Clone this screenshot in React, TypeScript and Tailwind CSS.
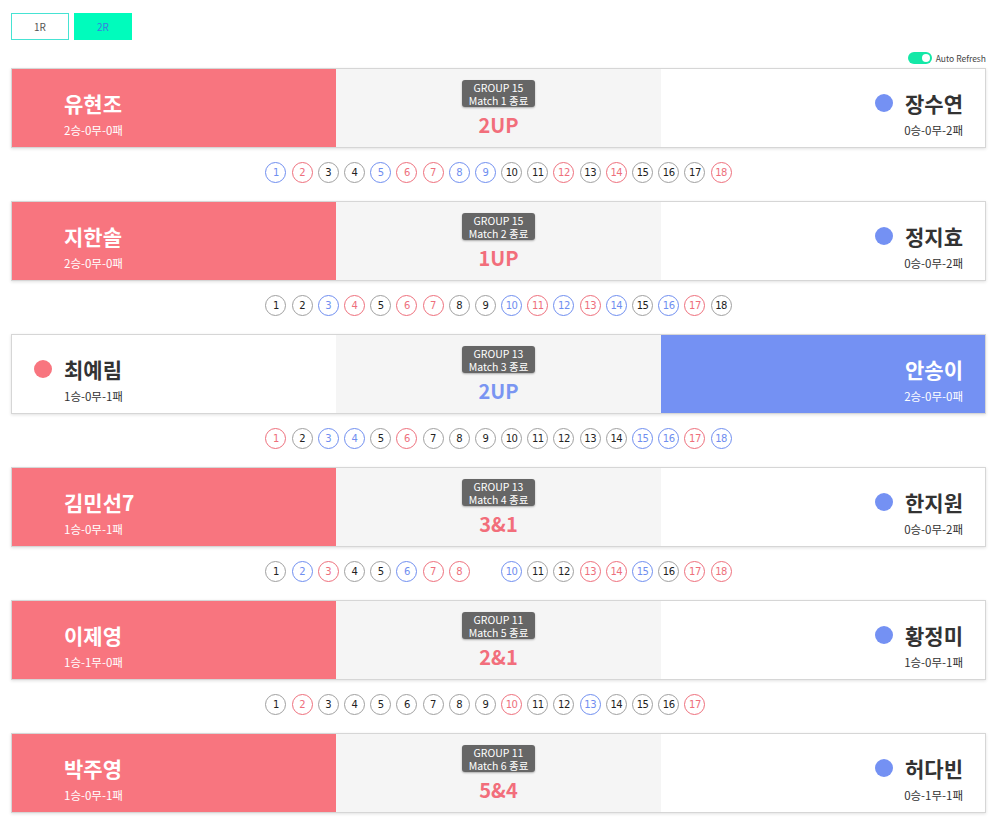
import React from "react";

type C = "b" | "r" | "g" | "x";
type Side = "red" | "blue";
interface Match {
  left: { name: string; rec: string };
  right: { name: string; rec: string };
  group: string;
  match: string;
  score: string;
  winner: Side;
  holes: C[];
}

const parse = (s: string): C[] => s.split("") as C[];

const matches: Match[] = [
  {
    left: { name: "유현조", rec: "2승-0무-0패" },
    right: { name: "장수연", rec: "0승-0무-2패" },
    group: "GROUP 15",
    match: "Match 1 종료",
    score: "2UP",
    winner: "red",
    holes: parse("brggbrrbbggrgrgggr"),
  },
  {
    left: { name: "지한솔", rec: "2승-0무-0패" },
    right: { name: "정지효", rec: "0승-0무-2패" },
    group: "GROUP 15",
    match: "Match 2 종료",
    score: "1UP",
    winner: "red",
    holes: parse("ggbrgrrggbrbrbgbrg"),
  },
  {
    left: { name: "최예림", rec: "1승-0무-1패" },
    right: { name: "안송이", rec: "2승-0무-0패" },
    group: "GROUP 13",
    match: "Match 3 종료",
    score: "2UP",
    winner: "blue",
    holes: parse("rgbbgrggggggggbbrb"),
  },
  {
    left: { name: "김민선7", rec: "1승-0무-1패" },
    right: { name: "한지원", rec: "0승-0무-2패" },
    group: "GROUP 13",
    match: "Match 4 종료",
    score: "3&1",
    winner: "red",
    holes: parse("gbrggbrrxbggrrbgrr"),
  },
  {
    left: { name: "이제영", rec: "1승-1무-0패" },
    right: { name: "황정미", rec: "1승-0무-1패" },
    group: "GROUP 11",
    match: "Match 5 종료",
    score: "2&1",
    winner: "red",
    holes: parse("grgggggggrggbgggrx"),
  },
  {
    left: { name: "박주영", rec: "1승-0무-1패" },
    right: { name: "허다빈", rec: "0승-1무-1패" },
    group: "GROUP 11",
    match: "Match 6 종료",
    score: "5&4",
    winner: "red",
    holes: [],
  },
];

const FONT = { fontFamily: '"Noto Sans CJK KR", "Noto Sans", sans-serif' };

function Hole({ n, c }: { n: number; c: C }) {
  if (c === "x") return <div className="w-[21px] h-[21px]" />;
  const cls =
    c === "b"
      ? "border-[#6f8ef0] text-[#6f8ef0]"
      : c === "r"
      ? "border-[#ee6f7c] text-[#ee6f7c]"
      : "border-[#a0a0a0] text-[#222]";
  return (
    <div
      className={`w-[21px] h-[21px] rounded-full border flex items-center justify-center text-[10px] leading-none bg-white ${cls}`}
      style={{ fontFamily: '"DejaVu Sans", sans-serif', letterSpacing: "-0.5px" }}
    >
      {n}
    </div>
  );
}

function Card({ m }: { m: Match }) {
  const redWin = m.winner === "red";
  return (
    <div className="h-[80px] border border-[#d6d6d6] shadow-[0_1px_3px_rgba(0,0,0,0.12)] grid grid-cols-3 bg-white">
      {/* left */}
      <div className={`min-w-0 pl-[22px] pt-[22px] ${redWin ? "bg-[#f8757f]" : "bg-white"}`}>
        <div className="flex items-center h-[24px] gap-[12px]">
          <div className={`w-[18px] h-[18px] rounded-full ${redWin ? "" : "bg-[#f8757f]"}`} />
          <div className={`text-[21px] font-bold leading-[24px] ${redWin ? "text-white" : "text-[#333]"}`}>
            {m.left.name}
          </div>
        </div>
        <div className={`ml-[30px] mt-[7px] text-[11.5px] leading-[16px] ${redWin ? "text-white" : "text-[#333]"}`}>
          {m.left.rec}
        </div>
      </div>
      {/* center */}
      <div className="min-w-0 bg-[#f5f5f5] flex flex-col items-center pt-[11px]">
        <div className="bg-[#666] text-white rounded-[3px] px-[7px] py-[0.5px] text-[10.5px] leading-[13px] text-center shadow-[0_1px_2px_rgba(0,0,0,0.3)]">
          <div>{m.group}</div>
          <div>{m.match}</div>
        </div>
        <div
          className={`mt-[6px] text-[20px] font-bold leading-[24px] ${redWin ? "text-[#f26e7b]" : "text-[#7a95f2]"}`}
        >
          {m.score}
        </div>
      </div>
      {/* right */}
      <div className={`min-w-0 pr-[22px] pt-[22px] flex flex-col items-end ${redWin ? "bg-white" : "bg-[#7491f3]"}`}>
        <div className="flex items-center h-[24px] gap-[12px]">
          <div className={`w-[18px] h-[18px] rounded-full ${redWin ? "bg-[#7491f3]" : ""}`} />
          <div className={`text-[21px] font-bold leading-[24px] ${redWin ? "text-[#333]" : "text-white"}`}>
            {m.right.name}
          </div>
        </div>
        <div className={`mt-[7px] text-[11.5px] leading-[16px] ${redWin ? "text-[#333]" : "text-white"}`}>
          {m.right.rec}
        </div>
      </div>
    </div>
  );
}

export default function App() {
  return (
    <div className="w-[999px] h-[817px] bg-white px-[11px] pt-[13px] overflow-hidden" style={FONT}>
      <div className="flex gap-[5px]">
        <div className="w-[58px] h-[27px] border border-[#46e3d3] flex items-center justify-center text-[10px] text-[#555]">
          1R
        </div>
        <div className="w-[58px] h-[27px] bg-[#00fcbc] flex items-center justify-center text-[10px] text-[#3b7be0]">
          2R
        </div>
      </div>
      <div className="mt-[12px] h-[12px] flex items-center justify-end gap-[4px] mr-[2px]">
        <div className="w-[24px] h-[12px] rounded-full bg-[#14e8a7] relative">
          <div className="absolute right-[2px] top-[2px] w-[8px] h-[8px] rounded-full bg-white" />
        </div>
        <div className="text-[8.5px] text-[#444] leading-none">Auto Refresh</div>
      </div>
      <div className="mt-[4px] w-[975px]">
        {matches.map((m, i) => (
          <div key={i}>
            <Card m={m} />
            {m.holes.length > 0 && (
              <div className="h-[53px] pt-[14px]">
                <div className="flex justify-center gap-[5.2px]">
                  {m.holes.map((c, j) => (
                    <Hole key={j} n={j + 1} c={c} />
                  ))}
                </div>
              </div>
            )}
          </div>
        ))}
      </div>
    </div>
  );
}
